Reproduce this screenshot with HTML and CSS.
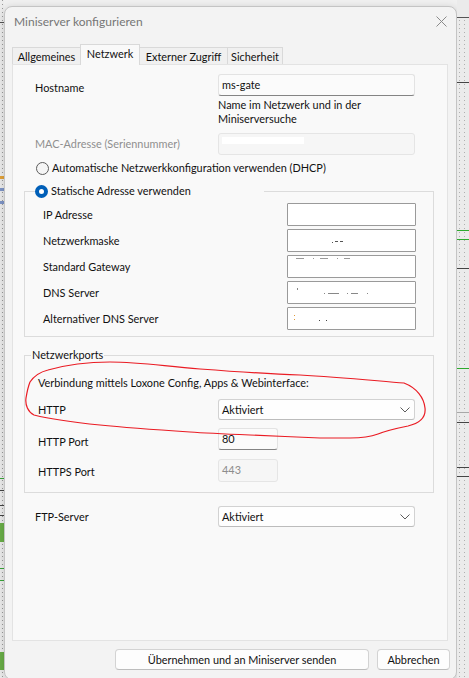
FILE: index.html
```html
<!DOCTYPE html>
<html lang="de">
<head>
<meta charset="utf-8">
<title>Miniserver konfigurieren</title>
<link rel="stylesheet" href="styles.css">
</head>
<body>
<div class="desktop">
  <div class="strip strip-left"></div>
  <div class="dialog-col">
    <div class="dialog">
      <div class="titlebar">
        <span class="title">Miniserver konfigurieren</span>
        <svg class="close" width="11" height="11" viewBox="0 0 11 11"><path d="M0.5 0.5 L10.5 10.5 M10.5 0.5 L0.5 10.5" stroke="#8a8a8a" stroke-width="1" fill="none"/></svg>
      </div>
      <div class="tabs">
        <div class="tab tab-allg">Allgemeines</div>
        <div class="tab tab-netz active">Netzwerk</div>
        <div class="tab tab-ext">Externer Zugriff</div>
        <div class="tab tab-sich">Sicherheit</div>
      </div>
      <div class="panel">
        <div class="row row-host">
          <span class="label label-low">Hostname</span>
          <div class="input input-edit wide">ms-gate</div>
        </div>
        <div class="hint">Name im Netzwerk und in der<br>Miniserversuche</div>
        <div class="row row-mac">
          <span class="label disabled">MAC-Adresse (Seriennummer)</span>
          <div class="input input-disabled wide"><span class="mac-mark"></span><span class="mac-bar"></span></div>
        </div>
        <div class="radio-row">
          <span class="radio"></span>
          <span>Automatische Netzwerkkonfiguration verwenden (DHCP)</span>
        </div>
        <fieldset class="group group-static">
          <legend class="legend-radio"><span class="radio checked"></span><span>Statische Adresse verwenden</span></legend>
          <div class="ip-row"><span class="ip-label">IP Adresse</span><div class="input input-ip"></div></div>
          <div class="ip-row"><span class="ip-label">Netzwerkmaske</span><div class="input input-ip">
            <svg class="residue" width="129" height="23" viewBox="0 0 129 23"><g fill="#555"><rect x="45" y="13" width="1" height="1"/><rect x="48" y="12" width="3" height="1"/><rect x="53" y="12" width="3" height="1"/></g></svg>
          </div></div>
          <div class="ip-row"><span class="ip-label">Standard Gateway</span><div class="input input-ip">
            <svg class="residue" width="129" height="23" viewBox="0 0 129 23"><g fill="#999"><rect x="9" y="3" width="8" height="1"/><rect x="26" y="3" width="1" height="1"/><rect x="33" y="3" width="8" height="1"/><rect x="50" y="3" width="1" height="1"/><rect x="57" y="3" width="6" height="1"/></g></svg>
          </div></div>
          <div class="ip-row"><span class="ip-label">DNS Server</span><div class="input input-ip">
            <svg class="residue" width="129" height="23" viewBox="0 0 129 23"><g fill="#888"><rect x="10" y="7" width="1" height="2"/><rect x="37" y="12" width="1" height="1"/><rect x="41" y="12" width="11" height="1"/><rect x="60" y="12" width="1" height="1"/><rect x="64" y="12" width="7" height="1"/><rect x="80" y="12" width="1" height="1"/></g></svg>
          </div></div>
          <div class="ip-row"><span class="ip-label">Alternativer DNS Server</span><div class="input input-ip">
            <svg class="residue" width="129" height="23" viewBox="0 0 129 23"><rect x="7" y="8" width="1" height="1" fill="#e09a3a"/><rect x="7" y="12" width="1" height="1" fill="#e09a3a"/><rect x="32" y="13" width="1" height="1" fill="#444"/><rect x="39" y="13" width="1" height="1" fill="#444"/></svg>
          </div></div>
        </fieldset>
        <fieldset class="group group-ports">
          <legend class="legend-text">Netzwerkports</legend>
          <div class="ports-intro">Verbindung mittels Loxone Config, Apps &amp; Webinterface:</div>
          <div class="prow prow-http">
            <span class="plabel">HTTP</span>
            <div class="select wide"><span>Aktiviert</span><svg class="chev" width="10" height="6" viewBox="0 0 10 6"><path d="M0.5 0.5 L5 5 L9.5 0.5" stroke="#5c5c5c" stroke-width="1" fill="none"/></svg></div>
          </div>
          <div class="prow prow-port">
            <span class="plabel plabel-low">HTTP Port</span>
            <div class="input input-edit narrow">80</div>
          </div>
          <div class="prow prow-https">
            <span class="plabel plabel-low2">HTTPS Port</span>
            <div class="input input-disabled narrow tall">443</div>
          </div>
        </fieldset>
        <div class="row row-ftp">
          <span class="label">FTP-Server</span>
          <div class="select wide"><span>Aktiviert</span><svg class="chev" width="10" height="6" viewBox="0 0 10 6"><path d="M0.5 0.5 L5 5 L9.5 0.5" stroke="#5c5c5c" stroke-width="1" fill="none"/></svg></div>
        </div>
      </div>
      <div class="buttons">
        <button class="btn btn-apply">Übernehmen und an Miniserver senden</button>
        <button class="btn btn-cancel">Abbrechen</button>
      </div>
    </div>
  </div>
  <div class="strip strip-right"></div>
  <svg class="annot" width="469" height="678" viewBox="0 0 469 678">
    <path d="M30 382 C34 376 40 372 48 370 C62 366 84 362 110 362 C140 362 162 366 200 369 C240 372 270 374 300 375 C340 377 378 381 404 383 C417 388 424 398 425 408 C426 417 421 423 408 426 C398 428 388 430 378 434 C370 437 364 438 350 438 L320 438 C300 437 270 436 250 435 C226 434 204 433 190 432 C160 430 130 428 100 425 C70 422 46 418 34 415 C28 412 25 405 26 398 C27 392 28 387 30 382" stroke="#ea1c24" stroke-width="1.2" fill="none"/>
  </svg>
</div>
</body>
</html>
```

FILE: styles.css
```css
* { box-sizing: border-box; }
html, body { margin: 0; padding: 0; }
body {
  font-family: Lato, "Liberation Sans", sans-serif;
  font-size: 10.9px;
  color: #111111;
  background: #f0f0f0;
}
.desktop {
  position: relative;
  width: 469px;
  height: 678px;
  overflow: hidden;
  display: grid;
  grid-template-columns: 4px 453px 12px;
  background: #f0f0f0;
}
.strip { height: 678px; }
.strip-left {
  background:
    linear-gradient(to bottom,
      transparent 22px, #555 22px 23px, transparent 23px 176px,
      #e3a33a 176px 179px, transparent 179px 188px,
      #7f96c8 188px 191px, transparent 191px 201px,
      #7f96c8 201px 204px, transparent 204px 478px,
      #3aa63a 478px 479px, transparent 479px 490px,
      #444 490px 491px, transparent 491px 505px,
      #444 505px 506px, transparent 506px 515px,
      #444 515px 516px, transparent 516px 523px,
      #6aaf48 523px 542px, transparent 542px 568px,
      #3aa63a 568px 569px, transparent 569px 580px,
      #3aa63a 580px 581px, transparent 581px 652px,
      #6aaf48 652px 670px, transparent 670px),
    repeating-linear-gradient(to bottom, #9a9a9a 0 1px, transparent 1px 4px) 2px 0 / 1px 100% no-repeat,
    #ededed;
}
.strip-right {
  background:
    linear-gradient(to bottom,
      transparent 17px, #555 17px 18px, transparent 18px 82px,
      #444 82px 83px, transparent 83px 230px,
      #2eaa2e 230px 231px, transparent 231px 239px,
      #2eaa2e 239px 240px, transparent 240px 268px,
      #444 268px 269px, transparent 269px 368px,
      #2eaa2e 368px 369px, transparent 369px 412px,
      #a8a8a8 412px 413px, transparent 413px 422px,
      #444 422px 423px, transparent 423px 467px,
      #444 467px 468px, transparent 468px 476px,
      #444 476px 477px, transparent 477px),
    repeating-linear-gradient(to bottom, #b0b0b0 0 1px, transparent 1px 4px) 2px 20px / 1px 100% no-repeat,
    repeating-linear-gradient(to bottom, #b0b0b0 0 1px, transparent 1px 4px) 7px 20px / 1px 100% no-repeat,
    #ebebeb;
}
.dialog-col { padding-top: 6px; }
.dialog {
  width: 453px;
  height: 674px;
  background: #f3f3f3;
  border: 1px solid #c4c4c4;
  border-radius: 8px;
  box-shadow: 0 2px 8px rgba(0,0,0,0.18);
  display: flex;
  flex-direction: column;
}
.titlebar {
  height: 31px;
  display: flex;
  justify-content: space-between;
  padding-left: 9px;
  flex: none;
}
.title {
  line-height: 30px;
  color: #767676;
  font-size: 12px;
}
.close { margin: 9px 9px 0 0; }

.tabs {
  margin-top: 6px;
  margin-left: 7px;
  height: 21px;
  margin-bottom: -1px;
  display: flex;
  align-items: flex-start;
  flex: none;
}
.tab {
  margin-top: 3px;
  height: 17px;
  border: 1px solid #d9d9d9;
  border-bottom: none;
  background: #f0f0f0;
  text-align: center;
  line-height: 17px;
  white-space: nowrap;
}
.tab + .tab { margin-left: -1px; }
.tab.active {
  margin-top: 0;
  height: 21px;
  background: #f9f9f9;
  position: relative;
  z-index: 1;
  line-height: 17px;
}
.tab-allg { width: 69px; }
.tab-netz { width: 60px; }
.tab-ext { width: 89px; }
.tab-sich { width: 56px; }

.panel {
  margin-left: 7px;
  width: 436px;
  height: 577px;
  background: #f9f9f9;
  border: 1px solid #e3e3e3;
  display: flex;
  flex-direction: column;
  flex: none;
}
.row {
  display: flex;
  align-items: center;
  padding-left: 22px;
}
.label {
  width: 183px;
  line-height: 16px;
  white-space: nowrap;
}
.label.disabled { color: #8f8f8f; }
.row-host { margin-top: 9px; align-items: flex-start; }
.label-low { padding-top: 6px; }
.input {
  position: relative;
  height: 22px;
  line-height: 20px;
  padding-left: 3px;
  border-radius: 3px;
}
.wide { width: 197px; }
.narrow { width: 60px; }
.tall { height: 23px; }
.input-edit {
  background: #fbfbfb;
  border: 1px solid #e3e3e3;
  border-bottom: 1px solid #848484;
}
.input-disabled {
  background: #f6f6f6;
  border: 1px solid #e5e5e5;
  color: #8c8c8c;
}
.hint {
  margin-left: 205px;
  margin-top: 2px;
  line-height: 14px;
}
.row-mac { margin-top: 7px; }
.mac-bar {
  position: absolute;
  left: 3px; top: 3px;
  width: 82px; height: 7px;
  background: #ffffff;
}
.mac-mark {
  position: absolute;
  left: 4px; top: 5px;
  width: 2px; height: 1px;
  background: #555;
}
.radio-row {
  margin-top: 5px;
  margin-left: 23px;
  height: 16px;
  display: flex;
  align-items: center;
  gap: 3px;
  white-space: nowrap;
  line-height: 16px;
}
.radio {
  display: inline-block;
  width: 13px;
  height: 13px;
  border-radius: 50%;
  border: 1px solid #5c5c5c;
  background: #f5f5f5;
  flex: none;
}
.radio.checked {
  border: 4px solid #005fb8;
  background: #ffffff;
}

.group {
  margin: 0 0 0 11px;
  width: 410px;
  padding: 0;
  border: 1px solid #dcdcdc;
  min-width: 0;
}
.group-static {
  margin-top: 7px;
  padding: 4px 0 6px 0;
}
.legend-radio {
  margin-left: 10px;
  padding: 0;
  width: 229px;
  height: 16px;
  display: flex;
  align-items: center;
  gap: 3px;
  line-height: 16px;
  white-space: nowrap;
  background: #f9f9f9;
}
.ip-row {
  display: flex;
  align-items: center;
  height: 23px;
}
.ip-row + .ip-row { margin-top: 3px; }
.ip-label {
  width: 262px;
  padding-left: 18px;
  white-space: nowrap;
}
.input-ip {
  width: 129px;
  height: 23px;
  padding: 0;
  background: #ffffff;
  border: 1px solid #9a9a9a;
  border-radius: 1px;
  overflow: hidden;
}
.residue { display: block; position: absolute; left: -1px; top: -1px; }

.group-ports {
  margin-top: 10px;
  padding: 0 0 10px 0;
}
.legend-text {
  margin-left: 6px;
  padding: 0 1px;
  line-height: 16px;
  height: 16px;
}
.ports-intro {
  margin-top: 12px;
  padding-left: 13px;
  line-height: 16px;
  white-space: nowrap;
}
.prow {
  display: flex;
  align-items: center;
}
.plabel {
  width: 193px;
  padding-left: 13px;
  line-height: 16px;
}
.prow-http { margin-top: 8px; }
.prow-port { margin-top: 8px; align-items: flex-start; }
.plabel-low { padding-top: 6px; }
.prow-https { margin-top: 9px; align-items: flex-start; }
.plabel-low2 { padding-top: 5px; }

.select {
  height: 21px;
  background: #fefefe;
  border: 1px solid #d2d2d2;
  border-bottom-color: #bcbcbc;
  border-radius: 3px;
  display: flex;
  align-items: center;
  justify-content: space-between;
  padding: 0 4px 0 3px;
  line-height: 19px;
}
.chev { margin-top: 1px; }
.row-ftp { margin-top: 13px; }

.buttons {
  margin-top: 8px;
  display: flex;
  justify-content: flex-end;
  gap: 8px;
  padding-right: 6px;
}
.btn {
  font-family: inherit;
  font-size: 10.9px;
  color: #111111;
  height: 21px;
  padding: 0;
  line-height: 19px;
  background: #fdfdfd;
  border: 1px solid #d3d3d3;
  border-bottom-color: #bdbdbd;
  border-radius: 4px;
}
.btn-apply { width: 254px; }
.btn-cancel { width: 73px; }

.annot {
  position: absolute;
  left: 0; top: 0;
  pointer-events: none;
}
```
